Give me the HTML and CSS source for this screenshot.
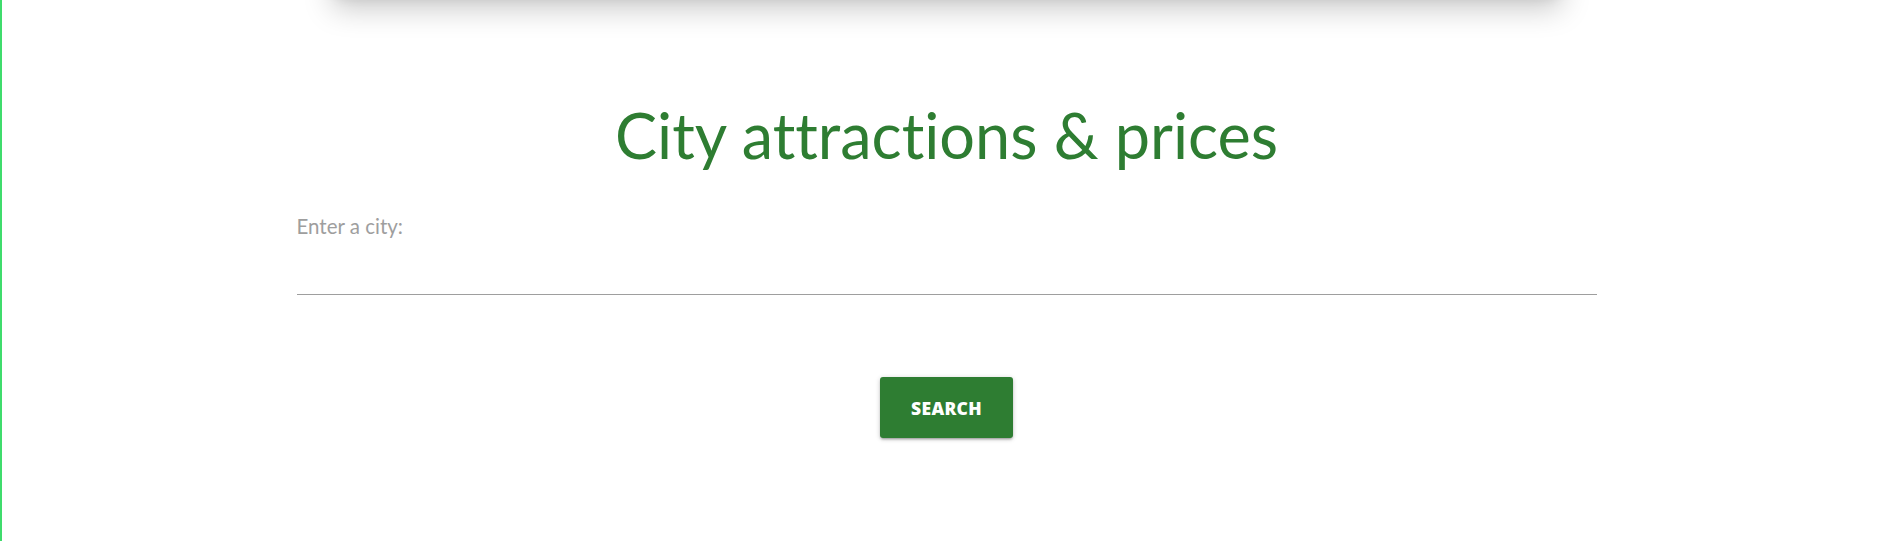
FILE: index.html
```html
<!DOCTYPE html>
<html lang="en">
<head>
<meta charset="utf-8">
<title>City attractions & prices</title>
<link rel="stylesheet" href="styles.css">
</head>
<body>
  <div class="topcard"></div>
  <main class="content">
    <h2 class="title">City attractions &amp; prices</h2>
    <form class="search-form">
      <label class="field-label" for="city">Enter a city:</label>
      <input class="field-input" id="city" type="text">
      <div class="actions">
        <button class="btn" type="button">SEARCH</button>
      </div>
    </form>
  </main>
</body>
</html>
```

FILE: styles.css
```css
html, body {
  margin: 0;
  padding: 0;
}
body {
  height: 541px;
  overflow: hidden;
  background: linear-gradient(to right, #3fdc6c 0, #3fdc6c 2px, #ffffff 2px);
  font-family: "Lato", "Liberation Sans", sans-serif;
  font-variant-ligatures: none;
}
.topcard {
  width: 1220px;
  height: 92px;
  margin: -100px auto 0;
  background: #fff;
  box-shadow: 0 12px 28px 4px rgba(0, 0, 0, 0.22), 0 4px 12px rgba(0, 0, 0, 0.12);
}
.content {
  width: 1300px;
  margin: 0 auto;
}
.title {
  margin: 108px 0 0;
  font-size: 63px;
  line-height: 69px;
  letter-spacing: 0;
  font-weight: 400;
  color: #2e7d32;
  text-align: center;
}
.search-form {
  display: flex;
  flex-direction: column;
  margin-top: 44px;
}
.field-label {
  font-size: 20.5px;
  line-height: 27px;
  color: #9e9e9e;
}
.field-input {
  height: 54px;
  padding: 0;
  margin: 0;
  border: none;
  border-bottom: 1px solid #9e9e9e;
  outline: none;
  background: transparent;
  font: inherit;
  font-size: 18px;
}
.actions {
  display: flex;
  justify-content: center;
  margin-top: 82px;
}
.btn {
  width: 133px;
  height: 61px;
  border: none;
  border-radius: 3px;
  background: #2e7d32;
  color: #fff;
  font-family: "Open Sans", "Liberation Sans", sans-serif;
  font-weight: 800;
  font-size: 17.5px;
  letter-spacing: 0.3px;
  box-shadow: 0 2px 2px 0 rgba(0,0,0,0.14), 0 3px 1px -2px rgba(0,0,0,0.12), 0 1px 5px 0 rgba(0,0,0,0.2);
  cursor: pointer;
}
```
